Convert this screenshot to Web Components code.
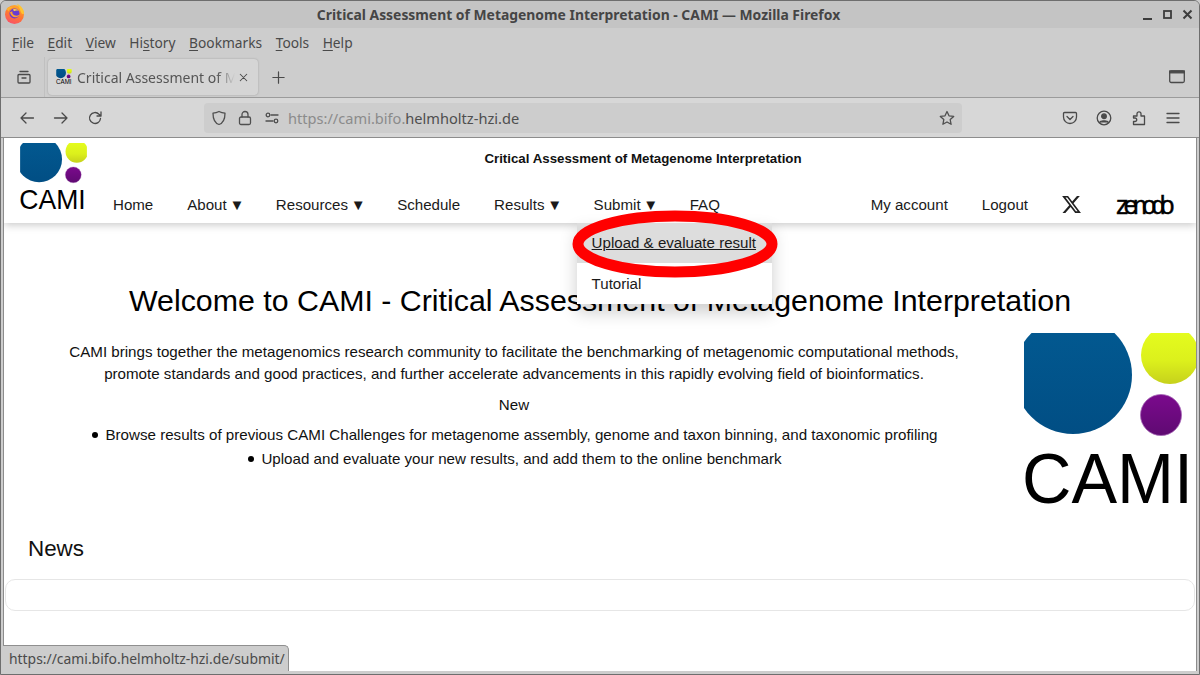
<!DOCTYPE html>
<html lang="en">
<head>
<meta charset="utf-8">
<title>Critical Assessment of Metagenome Interpretation - CAMI</title>
<style>
html,body{margin:0;padding:0;height:100%;overflow:hidden;background:#cdcdcd;}
</style>
</head>
<body>
<fx-window>
  <fx-titlebar slot="chrome">Critical Assessment of Metagenome Interpretation - CAMI — Mozilla Firefox</fx-titlebar>
  <fx-menubar slot="chrome"></fx-menubar>
  <fx-tabbar slot="chrome">Critical Assessment of Metagenome Interpretation</fx-tabbar>
  <fx-navbar slot="chrome"></fx-navbar>
  <cami-header></cami-header>
  <cami-main></cami-main>
  <fx-status slot="status">https://cami.bifo.helmholtz-hzi.de/submit/</fx-status>
</fx-window>
<script>
const icon=(d,w=16,h=16,extra='')=>`<svg width="${w}" height="${h}" viewBox="0 0 16 16" fill="none" stroke="currentColor" stroke-width="1.3" stroke-linecap="round" stroke-linejoin="round" ${extra}>${d}</svg>`;

class FxWindow extends HTMLElement{
  constructor(){
    super();
    this.attachShadow({mode:'open'}).innerHTML=`
    <style>
      :host{display:flex;flex-direction:column;width:1200px;height:675px;box-sizing:border-box;background:#cdcdcd;border:1px solid #6e6e6e;border-radius:6px 6px 0 0;overflow:hidden;position:relative;}
      .page{flex:1;min-height:0;margin:0 2px 3px 2px;background:#fff;border-left:1px solid #8c8c8c;border-right:1px solid #8c8c8c;display:flex;flex-direction:column;overflow:hidden;}
    </style>
    <slot name="chrome"></slot>
    <div class="page"><slot></slot></div>
    <slot name="status"></slot>`;
  }
}
customElements.define('fx-window',FxWindow);

class FxTitlebar extends HTMLElement{
  constructor(){
    super();
    this.attachShadow({mode:'open'}).innerHTML=`
    <style>
      :host{display:grid;grid-template-columns:28px 1fr 71px;align-items:center;height:27px;background:#c4c4c4;color:#454545;font:700 13.900px "Noto Sans",sans-serif;}
      .title{text-align:center;white-space:nowrap;overflow:hidden;}
      .logo{display:block;margin-left:3px;margin-top:-1px;}
      .ctl{display:flex;justify-content:flex-end;gap:9px;padding-right:6px;color:#3c3c3c;align-items:center;}
    </style>
    <svg class="logo" width="22" height="22" viewBox="0 0 22 22">
      <defs>
        <linearGradient id="o" x1="0.7" y1="0" x2="0.3" y2="1"><stop offset="0" stop-color="#ffb02c"/><stop offset=".5" stop-color="#ff7a2f"/><stop offset="1" stop-color="#f8506a"/></linearGradient>
      </defs>
      <circle cx="10.500" cy="11.500" r="9.500" fill="url(#o)"/>
      <path d="M13 .8c3.500 1.500 7 5 7 9.500 0 1-1 1.200-2.500 0C16 7 15 3.500 13 .8z" fill="#ffc531"/>
      <path d="M2.500 6C4 4 7 3.500 9 4.500 6.500 5 5 6.500 4.800 8.500z" fill="#ffb02c"/>
      <circle cx="10.500" cy="10.500" r="5" fill="#6a3cd0"/>
      <path d="M6 9.500C7 13 10 15 13 14c1.500-.5 2.500-1.500 2.800-2.800-1 1.300-3.300 2-5.300 1C8.500 11.500 8 9.500 8.500 8.500 7.500 8.500 6.500 8.800 6 9.500z" fill="#ffa12f"/>
      <path d="M9 6.500c2-1 4.500-.2 5.500 1.500-1.500-.6-3.500-.5-4.500.3z" fill="#ffd14a"/>
    </svg>
    <div class="title"><slot></slot></div>
    <div class="ctl">
      <svg width="11" height="11" viewBox="0 0 11 11"><rect x="1" y="9" width="9" height="2" fill="currentColor"/></svg>
      <svg width="11" height="11" viewBox="0 0 11 11" fill="none" stroke="currentColor" stroke-width="1.800"><rect x="2" y="2" width="7" height="7"/></svg>
      <svg width="11" height="11" viewBox="0 0 11 11" fill="none" stroke="currentColor" stroke-width="2"><path d="M1.500 1.500l8 8M9.500 1.500l-8 8"/></svg>
    </div>`;
  }
}
customElements.define('fx-titlebar',FxTitlebar);

class FxMenubar extends HTMLElement{
  constructor(){
    super();
    this.attachShadow({mode:'open'}).innerHTML=`
    <style>
      :host{display:flex;align-items:center;gap:13.500px;height:28px;padding-left:11px;margin-bottom:-1px;position:relative;background:#cdcdcd;color:#4a4a4a;font:13.750px "Noto Sans",sans-serif;}
      u{text-underline-offset:2px;}
    </style>
    <span><u>F</u>ile</span><span><u>E</u>dit</span><span><u>V</u>iew</span><span>Hi<u>s</u>tory</span><span><u>B</u>ookmarks</span><span><u>T</u>ools</span><span><u>H</u>elp</span>`;
  }
}
customElements.define('fx-menubar',FxMenubar);

class FxTabbar extends HTMLElement{
  constructor(){
    super();
    this.attachShadow({mode:'open'}).innerHTML=`
    <style>
      :host{display:flex;align-items:center;height:43px;box-sizing:border-box;padding-top:2px;background:#cdcdcd;border-bottom:1px solid #9b9b9b;color:#4a4a4a;font:14px "Noto Sans",sans-serif;}
      .view{width:44px;height:100%;box-sizing:border-box;display:flex;align-items:center;justify-content:center;border-right:1px solid #c0c0c0;padding-left:2px;}
      .tab{margin-left:3px;width:210px;height:36px;box-sizing:border-box;background:#d5d5d5;border-radius:4px;box-shadow:0 0 2px #9c9c9c;display:flex;align-items:center;padding-left:8px;position:relative;}
      .fav{flex:none;width:16px;height:16px;margin-right:5px;}
      .txt{width:158px;white-space:nowrap;overflow:hidden;color:#555;-webkit-mask-image:linear-gradient(90deg,#000 140px,transparent 158px);mask-image:linear-gradient(90deg,#000 140px,transparent 158px);}
      .close{margin-left:2px;display:flex;}
      .plus{margin-left:13px;display:flex;}
      .spacer{flex:1;}
      .win{margin-right:14px;display:flex;}
    </style>
    <div class="view">${icon('<path d="M3 5.500h10a1 1 0 0 1 1 1V13a1 1 0 0 1-1 1H3a1 1 0 0 1-1-1V6.500a1 1 0 0 1 1-1zM4 2.500h8M6 9h4"/>')}</div>
    <div class="tab">
      <cami-logo class="fav" size="16"></cami-logo>
      <div class="txt"><slot></slot></div>
      <div class="close">${icon('<path d="M4 4l8 8M12 4l-8 8"/>',13,13)}</div>
    </div>
    <div class="plus">${icon('<path d="M8 2v12M2 8h12"/>',15,15)}</div>
    <div class="spacer"></div>
    <div class="win"><svg width="16" height="14" viewBox="0 0 16 14" fill="none" stroke="currentColor" stroke-width="1.300"><rect x=".7" y="1" width="14.600" height="11.500" rx="1.500"/><rect x=".7" y="1" width="14.600" height="1.800" fill="currentColor"/></svg></div>`;
  }
}
customElements.define('fx-tabbar',FxTabbar);

class FxNavbar extends HTMLElement{
  constructor(){
    super();
    this.attachShadow({mode:'open'}).innerHTML=`
    <style>
      :host{display:flex;align-items:center;height:40px;box-sizing:border-box;background:#d7d7d7;border-bottom:1px solid #8d8d8d;color:#4a4a4a;}
      .btns{display:flex;gap:18px;padding-left:18px;width:203px;box-sizing:border-box;}
      .url{width:758px;height:30px;box-sizing:border-box;background:#cdcdcd;border-radius:4px;display:flex;align-items:center;padding-left:7px;font:14.600px "Noto Sans",sans-serif;color:#4f4f4f;}
      .url svg{flex:none;}
      .l1{margin-left:10px}.l2{margin-left:11px}
      .addr{margin-left:8px;flex:1;white-space:nowrap;}
      .addr span{color:#8b8b8b;}
      .star{margin-right:7px;}
      .tools{display:flex;gap:18.300px;margin-left:100px;}
    </style>
    <div class="btns">
      ${icon('<path d="M14.500 8H2M7 3L2 8l5 5"/>')}
      ${icon('<path d="M1.500 8H14M9 3l5 5-5 5"/>')}
      ${icon('<path d="M13.500 8.500A5.500 5.500 0 1 1 12 4.200L14 6M14 2v4h-4"/>')}
    </div>
    <div class="url">
      ${icon('<path d="M8 1.500c2 1 4 1.500 6 1.700 0 5-1 9.500-6 11.300C3 12.700 2 8.200 2 3.200c2-.2 4-.7 6-1.700z"/>')}
      <span class="l1" style="display:flex">${icon('<rect x="2.500" y="7" width="11" height="7.500" rx="1.500"/><path d="M5 7V4.500a3 3 0 0 1 6 0V7"/>')}</span>
      <span class="l2" style="display:flex">${icon('<path d="M7 5h7M2 11h7"/><circle cx="4" cy="5" r="1.800"/><circle cx="12" cy="11" r="1.800"/>')}</span>
      <div class="addr"><span>https://cami.bifo.</span>helmholtz-hzi.de</div>
      <span class="star" style="display:flex">${icon('<path d="M8 1.500l2 4.300 4.700.6-3.500 3.200.9 4.700L8 12l-4.100 2.300.9-4.700L1.300 6.400 6 5.800z"/>')}</span>
    </div>
    <div class="tools">
      ${icon('<path d="M2.500 2.500h11a1 1 0 0 1 1 1V7a6.500 6.500 0 0 1-13 0V3.500a1 1 0 0 1 1-1zM5 6.500L8 9.500l3-3"/>')}
      ${icon('<circle cx="8" cy="8" r="6.800"/><circle cx="8" cy="6.200" r="2.300" fill="currentColor"/><path d="M3.500 12.500c1-2.300 8-2.300 9 0" fill="currentColor"/>')}
      ${icon('<path d="M2.500 6H6V3.800a2 2 0 0 1 4 0V6h3.500v8.500h-11v-3H4a1.700 1.700 0 0 0 0-3.500H2.500z"/>')}
      ${icon('<path d="M2 3.500h12M2 8h12M2 12.500h12"/>')}
    </div>`;
  }
}
customElements.define('fx-navbar',FxNavbar);

class FxStatus extends HTMLElement{
  constructor(){
    super();
    this.attachShadow({mode:'open'}).innerHTML=`
    <style>
      :host{position:absolute;left:2px;bottom:3px;height:26px;box-sizing:border-box;padding:0 3px 0 6px;background:#cdcdcd;border:1px solid #8f8f8f;border-left:0;border-bottom:0;border-radius:0 5px 0 0;color:#4a4a4a;font:13.900px/25px "Noto Sans",sans-serif;white-space:nowrap;}
    </style><slot></slot>`;
  }
}
customElements.define('fx-status',FxStatus);

class CamiLogo extends HTMLElement{
  constructor(){
    super();
    const s=+this.getAttribute('size')||172;
    const n=CamiLogo.n=(CamiLogo.n||0)+1;
    const k=s/172;
    this.attachShadow({mode:'open'}).innerHTML=`
    <style>
      :host{display:block;width:${s}px;height:${s}px;}
      svg{display:block;overflow:visible;}
      text{font-family:"Liberation Sans",Arial,sans-serif;fill:#000;}
    </style>
    <svg width="${s}" height="${Math.round(188*k)}" viewBox="0 0 172 188">
      <defs>
        <linearGradient id="bl${n}" x1="0" y1="0" x2="0" y2="1"><stop offset="0" stop-color="#025a92"/><stop offset="1" stop-color="#014e84"/></linearGradient>
        <linearGradient id="y${n}" x1="0" y1="0" x2="0" y2="1"><stop offset="0" stop-color="#e6ff1e"/><stop offset=".6" stop-color="#dcf01c"/><stop offset="1" stop-color="#c6d11c"/></linearGradient>
        <linearGradient id="p${n}" x1="0" y1="0" x2="0" y2="1"><stop offset="0" stop-color="#7b0a8d"/><stop offset="1" stop-color="#5f0a72"/></linearGradient>
        <clipPath id="c${n}"><rect width="172" height="172"/></clipPath>
      </defs>
      <g clip-path="url(#c${n})">
        <circle cx="49" cy="42" r="59" fill="url(#bl${n})"/>
        <circle cx="146" cy="22" r="29" fill="url(#y${n})"/>
        <circle cx="137" cy="82" r="20.500" fill="url(#p${n})" stroke="#a565b5" stroke-width=".8"/>
      </g>
      <text x="-2" y="170" font-size="71" textLength="171" lengthAdjust="spacingAndGlyphs">CAMI</text>
    </svg>`;
  }
}
customElements.define('cami-logo',CamiLogo);

class NavLink extends HTMLElement{
  constructor(){
    super();
    this.attachShadow({mode:'open'}).innerHTML=`
    <style>
      :host{display:block;position:relative;padding:0 17px;height:37px;line-height:37px;color:#1a1a1a;white-space:nowrap;}
    </style><slot></slot><slot name="menu"></slot>`;
  }
}
customElements.define('nav-link',NavLink);

class CamiDropdown extends HTMLElement{
  constructor(){
    super();
    this.attachShadow({mode:'open'}).innerHTML=`
    <style>
      :host{position:absolute;left:0;top:37px;width:195px;background:#fff;box-shadow:0 8px 16px rgba(0,0,0,.2);z-index:5;display:block;}
      .item{display:block;height:40px;line-height:40px;padding-left:15px;color:#1a1a1a;}
      .item+.item{height:41px;line-height:42px;}
      .on{background:#ddd;text-decoration:underline;}
      svg{position:absolute;left:-7px;top:-16px;overflow:visible;pointer-events:none;}
    </style>
    <div class="item on">Upload &amp; evaluate result</div>
    <div class="item">Tutorial</div>
    <svg width="208" height="70" viewBox="0 0 208 70"><ellipse cx="105" cy="37" rx="97" ry="28" fill="none" stroke="#f00" stroke-width="11"/></svg>`;
  }
}
customElements.define('cami-dropdown',CamiDropdown);

class CamiHeader extends HTMLElement{
  constructor(){
    super();
    this.attachShadow({mode:'open'}).innerHTML=`
    <style>
      :host{display:flex;flex:none;height:85px;box-sizing:border-box;background:#fff;box-shadow:0 2px 8px rgba(0,0,0,.22);position:relative;z-index:3;font:15.100px "Liberation Sans",Arial,sans-serif;}
      cami-logo{margin:5px 0 0 16px;flex:none;}
      .col{flex:1;display:flex;flex-direction:column;}
      .title{font-weight:700;font-size:13.300px;color:#111;text-align:center;height:48px;line-height:41px;padding-left:3px;}
      nav{display:flex;justify-content:space-between;padding-left:9px;}
      .grp{display:flex;}
      .x{display:flex;align-items:center;padding:0 0 0 16px;height:37px;}
      .z{width:56px;margin:0 24px 0 34px;height:37px;line-height:38px;font-size:25px;letter-spacing:-4.700px;color:#000;white-space:nowrap;-webkit-text-stroke:.4px #000;}
      .a{margin:0 -2.500px 0 -1.500px;}
    </style>
    <cami-logo size="67"></cami-logo>
    <div class="col">
      <div class="title">Critical Assessment of Metagenome Interpretation</div>
      <nav>
        <div class="grp">
          <nav-link>Home</nav-link>
          <nav-link>About <span class="a">▼</span></nav-link>
          <nav-link>Resources <span class="a">▼</span></nav-link>
          <nav-link>Schedule</nav-link>
          <nav-link>Results <span class="a">▼</span></nav-link>
          <nav-link>Submit <span class="a">▼</span><cami-dropdown slot="menu"></cami-dropdown></nav-link>
          <nav-link>FAQ</nav-link>
        </div>
        <div class="grp">
          <nav-link>My account</nav-link>
          <nav-link>Logout</nav-link>
          <div class="x"><svg width="21" height="21" viewBox="0 0 24 24" fill="#222"><path d="M18.244 2.250h3.308l-7.227 8.260 8.502 11.240H16.170l-5.214-6.817L4.990 21.750H1.680l7.730-8.835L1.254 2.250H8.080l4.713 6.231zm-1.161 17.520h1.833L7.084 4.126H5.117z"/></svg></div>
          <div class="z">zenodo</div>
        </div>
      </nav>
    </div>`;
  }
}
customElements.define('cami-header',CamiHeader);

class CamiMain extends HTMLElement{
  constructor(){
    super();
    this.attachShadow({mode:'open'}).innerHTML=`
    <style>
      :host{display:block;flex:1;font:15.150px/22.400px "Liberation Sans",Arial,sans-serif;color:#111;}
      h1{font-size:30.350px;font-weight:400;line-height:36px;text-align:center;margin:0;padding-top:60px;height:50px;color:#000;}
      .intro{display:flex;}
      .copy{flex:1;text-align:center;}
      p{margin:8px 0;}
      ul{margin:0;padding:0 39px 0 41px;list-style:none;}
      li{margin-bottom:1.600px;}
      li::before{content:"";display:inline-block;width:6px;height:6px;border-radius:50%;background:#000;margin-right:7px;vertical-align:2px;}
      cami-logo{flex:none;}
      h2{font-size:22.400px;font-weight:400;margin:31px 0 0 24px;line-height:26px;color:#111;}
      .news{height:32px;box-sizing:border-box;margin:17px 1px 0;border:1px solid #e6e6e6;border-radius:10px;}
    </style>
    <h1>Welcome to CAMI - Critical Assessment of Metagenome Interpretation</h1>
    <div class="intro">
      <div class="copy">
        <p>CAMI brings together the metagenomics research community to facilitate the benchmarking of metagenomic computational methods,<br>promote standards and good practices, and further accelerate advancements in this rapidly evolving field of bioinformatics.</p>
        <p>New</p>
        <ul>
          <li>Browse results of previous CAMI Challenges for metagenome assembly, genome and taxon binning, and taxonomic profiling</li>
          <li>Upload and evaluate your new results, and add them to the online benchmark</li>
        </ul>
      </div>
      <cami-logo></cami-logo>
    </div>
    <h2>News</h2>
    <div class="news"></div>`;
  }
}
customElements.define('cami-main',CamiMain);
</script>
</body>
</html>
